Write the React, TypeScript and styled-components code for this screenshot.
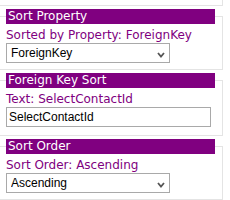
import styled, { createGlobalStyle } from "styled-components";

// 頁面基本設定
const GlobalStyle = createGlobalStyle`
  html, body { margin: 0; background: #fff; }
  body { font-family: "DejaVu Sans", Verdana, sans-serif; font-size: 12px; }
`;

const Page = styled.div`
  width: 224px;
  margin-left: -1px;
`;

// 上一個區塊的底邊（只露出一點點）
const PrevEdge = styled.div`
  height: 5px;
  border-right: 1px solid #e4e4e4;
  border-bottom: 1px solid #e4e4e4;
`;

const Group = styled.fieldset<{ $tail: number }>`
  margin: 3px 0 0;
  padding: 0 0 ${(p) => p.$tail}px 6px;
  border: 1px solid #e4e4e4;
  min-width: 0;
`;

const Legend = styled.legend`
  box-sizing: border-box;
  width: 209px;
  height: 15px;
  padding: 0 2px;
  background: #800080;
  color: #fff;
  font-size: 12px;
  line-height: 15px;
`;

const Caption = styled.div`
  margin-top: 4px;
  color: #800080;
  font-size: 12px;
  line-height: 15px;
`;

const SelectWrap = styled.div`
  position: relative;
  width: 164px;
`;

const Select = styled.select`
  appearance: none;
  box-sizing: border-box;
  display: block;
  width: 100%;
  height: 20px;
  margin: 0;
  padding: 0 0 0 4px;
  border: 1px solid #a9a9a9;
  border-radius: 0;
  background: #fff;
  color: #000;
  font-family: "Liberation Sans", Arial, sans-serif;
  font-size: 12px;
`;

const Chevron = styled.svg`
  position: absolute;
  right: 5px;
  top: 9px;
  pointer-events: none;
`;

const TextInput = styled.input`
  box-sizing: border-box;
  display: block;
  width: 205px;
  height: 20px;
  margin: 0;
  padding: 0 2px;
  border: 1px solid #a9a9a9;
  border-radius: 0;
  color: #000;
  font-family: "Liberation Sans", Arial, sans-serif;
  font-size: 12px;
  outline: none;
`;

interface DropProps {
  value: string;
  options: string[];
}

const Dropdown: React.FC<DropProps> = ({ value, options }) => (
  <SelectWrap>
    <Select defaultValue={value}>
      {options.map((o) => (
        <option key={o}>{o}</option>
      ))}
    </Select>
    <Chevron width="8" height="6" viewBox="0 0 8 6">
      <path d="M1 1 L4 4.5 L7 1" fill="none" stroke="#555" strokeWidth="1.8" />
    </Chevron>
  </SelectWrap>
);

export default function App() {
  return (
    <Page>
      <GlobalStyle />
      <PrevEdge />
      <Group $tail={6}>
        <Legend>Sort Property</Legend>
        <Caption>Sorted by Property: ForeignKey</Caption>
        <Dropdown value="ForeignKey" options={["ForeignKey", "Name", "Id"]} />
      </Group>
      <Group $tail={8}>
        <Legend>Foreign Key Sort</Legend>
        <Caption>Text: SelectContactId</Caption>
        <TextInput defaultValue="SelectContactId" />
      </Group>
      <Group $tail={6}>
        <Legend>Sort Order</Legend>
        <Caption>Sort Order: Ascending</Caption>
        <Dropdown value="Ascending" options={["Ascending", "Descending"]} />
      </Group>
    </Page>
  );
}
